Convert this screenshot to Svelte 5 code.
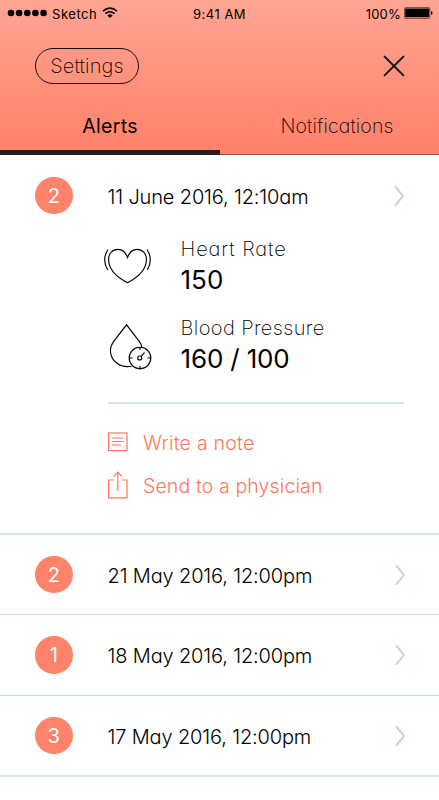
<script lang="ts">
  type Alert = { count: number; date: string };

  const later: Alert[] = [
    { count: 2, date: "21 May 2016, 12:00pm" },
    { count: 1, date: "18 May 2016, 12:00pm" },
    { count: 3, date: "17 May 2016, 12:00pm" },
  ];

  let tab = $state("alerts");
</script>

{#snippet summary(alert: Alert)}
  <span class="count">{alert.count}</span>
  <span class="date">{alert.date}</span>
  <svg class="chevron" width="12" height="22" viewBox="0 0 12 22">
    <path d="M2.6 2 L10 11 L2.6 20" />
  </svg>
{/snippet}

<div class="screen">
  <header>
    <div class="status">
      <div class="carrier">
        <svg width="42" height="8" viewBox="0 0 42 8">
          {#each [4, 12.1, 20.3, 28.4, 36.6] as cx}
            <circle {cx} cy="4" r="3.3" />
          {/each}
        </svg>
        <span class="network">Sketch</span>
        <svg class="wifi" width="16" height="12" viewBox="0 0 16 12">
          <path d="M1 4.2 Q8 -1.8 15 4.2 M3.4 6.7 Q8 2.8 12.6 6.7" fill="none" stroke="#000" stroke-width="1.6" />
          <path d="M5.4 8.4 Q8 6.2 10.6 8.4 L8 11 Z" />
        </svg>
      </div>
      <span class="time">9:41 AM</span>
      <div class="power">
        <span class="percent">100%</span>
        <svg width="29" height="12" viewBox="0 0 29 12">
          <rect x="0.5" y="0.5" width="25.4" height="11" rx="1.5" fill="none" stroke="#000" stroke-opacity=".5" />
          <rect x="1.2" y="1.6" width="24" height="8.6" rx=".6" />
          <path d="M27 4 Q28.6 4.4 28.6 6 Q28.6 7.6 27 8 Z" />
        </svg>
      </div>
    </div>

    <div class="toolbar">
      <button class="settings">Settings</button>
      <button class="close" aria-label="Close">
        <svg width="22" height="22" viewBox="0 0 22 22">
          <path d="M1.6 1.6 L20.4 20.4 M20.4 1.6 L1.6 20.4" />
        </svg>
      </button>
    </div>

    <nav>
      <button class="tab first" class:active={tab === "alerts"} onclick={() => (tab = "alerts")}>
        <span>Alerts</span>
      </button>
      <button class="tab" class:active={tab === "notifications"} onclick={() => (tab = "notifications")}>
        <span>Notifications</span>
      </button>
    </nav>
  </header>

  <main>
    <section class="open">
      <div class="row top">
        {@render summary({ count: 2, date: "11 June 2016, 12:10am" })}
      </div>

      <div class="reading">
        <svg width="50" height="48" viewBox="0 0 50 48">
          <path d="M24.5 13.5 C22.5 8 19 5.3 15 5.3 C9.5 5.3 5.6 9.6 5.6 15.5 C5.6 25 14 33.3 24.5 38.7 C35 33.3 43.4 25 43.4 15.5 C43.4 9.6 39.5 5.3 34 5.3 C30 5.3 26.5 8 24.5 13.5 Z" />
          <path d="M5 5.5 Q-1.5 15.5 4.7 26 M44 5.5 Q50.5 15.5 44.3 26" />
        </svg>
        <div>
          <div class="label heart">Heart Rate</div>
          <div class="value bpm">150</div>
        </div>
      </div>

      <div class="reading">
        <svg width="50" height="48" viewBox="0 0 50 48">
          <path d="M28.5 43.2 C17 45.5 7.4 37.5 7.4 27.5 C7.4 23.5 8.8 20.8 11.5 17.3 L23.5 1.8 L36.3 18.3 Q38.6 21.4 38.9 24.4" />
          <circle cx="37" cy="35" r="10.8" />
          <circle cx="36.7" cy="35" r="2" />
          <path d="M38.2 33.4 L41.5 29.6 M26.5 35 h3 M44.5 35 h3 M37 43 v3 M37 24.5 v2.5" />
        </svg>
        <div>
          <div class="label blood">Blood Pressure</div>
          <div class="value mmhg">160 / 100</div>
        </div>
      </div>

      <div class="actions">
        <button class="action">
          <svg width="20" height="28" viewBox="0 0 20 28">
            <rect x=".6" y="5" width="18.4" height="17.6" />
            <path d="M4 10 h11 M4 13.5 h12 M4 17 h9" />
          </svg>
          <span class="write">Write a note</span>
        </button>
        <button class="action">
          <svg width="20" height="28" viewBox="0 0 20 28">
            <path d="M6 9 H.6 V26.8 H19 V9 H14 M9.8 20 V1.2 M5.5 5.6 L9.8 1.2 L14.1 5.6" />
          </svg>
          <span class="send">Send to a physician</span>
        </button>
      </div>
    </section>

    {#each later as alert}
      <section class="row">
        {@render summary(alert)}
      </section>
    {/each}
  </main>
</div>

<style>
  :global(body) {
    margin: 0;
    background: #fff;
  }
  .screen {
    width: 439px;
    height: 800px;
    overflow: hidden;
    background: #fff;
    color: #000;
    font-family: Inter, "Liberation Sans", sans-serif;
    font-weight: 300;
    /* single-storey a */
    font-feature-settings: "cv11";
  }
  button {
    padding: 0;
    border: 0;
    background: none;
    color: inherit;
    font: inherit;
    font-feature-settings: inherit;
    cursor: pointer;
  }
  svg {
    display: block;
    flex: none;
  }
  span,
  .label,
  .value {
    white-space: nowrap;
  }
  header {
    display: flex;
    flex-direction: column;
    box-sizing: border-box;
    height: 155px;
    background: linear-gradient(#ffa592, #ff8169);
    border-bottom: 1px solid #a84c3c;
  }
  .status {
    display: grid;
    grid-template-columns: 186px 1fr 186px;
    align-items: center;
    height: 25px;
    font-size: 13px;
    font-weight: 400;
  }
  .carrier,
  .power {
    display: flex;
    align-items: center;
  }
  .carrier {
    padding-left: 7px;
  }
  .network,
  .time,
  .percent {
    padding-top: 2px;
  }
  .network {
    width: 50px;
    margin-left: 3px;
    letter-spacing: 0.55px;
  }
  .time {
    padding-left: 7px;
    letter-spacing: 0.5px;
  }
  .percent {
    letter-spacing: 0.2px;
  }
  .power {
    justify-content: flex-end;
    gap: 3px;
    padding-right: 6px;
  }
  .toolbar {
    display: flex;
    justify-content: space-between;
    align-items: center;
    height: 36px;
    margin-top: 22px;
    padding: 0 34px 0 35px;
  }
  .settings {
    position: relative;
    top: 0.5px;
    width: 104px;
    height: 36px;
    border: 1.3px solid #111;
    border-radius: 18px;
    font-size: 20px;
    font-weight: 200;
    line-height: 35px;
    letter-spacing: 0.15px;
  }
  .close {
    padding-top: 2px;
  }
  .close path {
    stroke: #111;
    stroke-width: 2;
    stroke-linecap: round;
  }
  nav {
    display: flex;
    flex: 1;
    margin-top: 17px;
    margin-bottom: -1px;
  }
  .tab {
    box-sizing: border-box;
    flex: 1;
    height: 55px;
    padding: 2px 0 0 15px;
    border-bottom: 5px solid transparent;
    font-size: 19.5px;
    font-weight: 200;
    letter-spacing: 0.15px;
  }
  .tab.first {
    flex: 0 0 220px;
    padding-left: 0;
  }
  .tab.active {
    border-color: #231f20;
    font-weight: 400;
    letter-spacing: 0.3px;
  }
  .row {
    display: flex;
    align-items: center;
    box-sizing: border-box;
    height: 81px;
    padding: 0 33px 0 35px;
    border-bottom: 1px solid #bddddb;
  }
  .open + .row {
    height: 80px;
  }
  .row:last-child {
    border-bottom: 2px solid #d6eae9;
  }
  .row.top {
    height: 81px;
    padding-right: 34px;
    border: 0;
  }
  .open {
    box-sizing: border-box;
    height: 380px;
    border-bottom: 2px solid #d2e7e6;
  }
  .count {
    width: 37.5px;
    height: 37.5px;
    border-radius: 50%;
    background: #ff836b;
    color: #fff;
    font-size: 20px;
    font-weight: 400;
    line-height: 39px;
    text-align: center;
  }
  .date {
    flex: 1;
    margin-left: 35px;
    padding-top: 2px;
    font-size: 20px;
    letter-spacing: -0.15px;
  }
  .chevron path {
    fill: none;
    stroke: #bcdcdc;
    stroke-width: 2;
    stroke-linecap: round;
  }
  .reading {
    display: flex;
    height: 79px;
    padding-left: 103px;
  }
  .reading svg {
    margin-top: 8px;
    fill: none;
    stroke: #000;
    stroke-width: 1.15;
  }
  .reading > div {
    margin-left: 27.5px;
  }
  .label {
    height: 27px;
    font-size: 20px;
    font-weight: 200;
    line-height: 27px;
  }
  .heart {
    letter-spacing: 0.9px;
  }
  .blood {
    letter-spacing: 0.4px;
  }
  .value {
    font-size: 26px;
    font-weight: 400;
    line-height: 34px;
  }
  .mmhg {
    letter-spacing: -0.15px;
  }
  .actions {
    display: flex;
    flex-direction: column;
    gap: 15px;
    margin: 8px 35px 0 108px;
    padding-top: 25px;
    border-top: 2px solid #d2e6e6;
    color: #ff775d;
  }
  .action {
    display: flex;
    align-items: center;
    gap: 15px;
    height: 28px;
    font-size: 19.5px;
    font-feature-settings: normal;
  }
  .action svg {
    margin-bottom: 2px;
    fill: none;
    stroke: #ff775d;
    stroke-width: 1.2;
  }
  .write {
    letter-spacing: 0.25px;
  }
  .send {
    letter-spacing: 0.12px;
  }
</style>
